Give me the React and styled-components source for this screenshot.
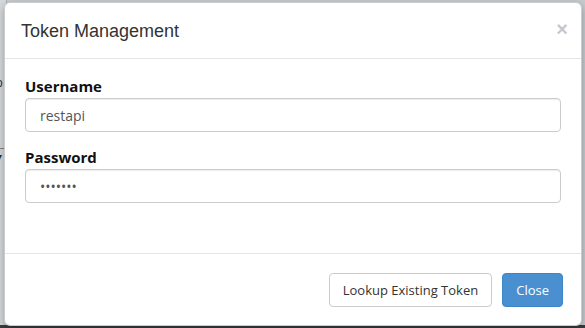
import React from "react";
import styled, { createGlobalStyle } from "styled-components";

const Global = createGlobalStyle`
  html, body { margin: 0; padding: 0; }
  body {
    width: 585px;
    height: 328px;
    overflow: hidden;
    background: #c6cbd0;
    font-family: "Open Sans", "Noto Sans", sans-serif;
  }
  #root { height: 328px; }
`;

const Backdrop = styled.div`
  position: relative;
  height: 328px;
  background: #c6cbd0;
  overflow: hidden;
`;

const BackStrip = styled.div`
  position: absolute;
  left: 0;
  top: 0;
  width: 6px;
  height: 328px;
  background: #d5d9dc;
  border-right: 1px solid #a9aeb3;
`;

const BackText = styled.span`
  position: absolute;
  left: -4px;
  top: ${(p) => p.$top}px;
  font-size: 12px;
  color: #333;
  font-family: "Liberation Sans", sans-serif;
`;

const BackLine = styled.div`
  position: absolute;
  left: 0;
  top: ${(p) => p.$top}px;
  width: 6px;
  height: 1px;
  background: #7d838a;
`;

const BottomBar = styled.div`
  position: absolute;
  left: 0;
  bottom: 0;
  width: 585px;
  height: 3px;
  background: #3a3d40;
`;

const Dialog = styled.div`
  position: absolute;
  left: 4px;
  top: 2px;
  width: 578px;
  box-sizing: border-box;
  background: #fff;
  border: 1px solid rgba(0, 0, 0, 0.2);
  border-radius: 6px;
  box-shadow: 0 3px 9px rgba(0, 0, 0, 0.3);
  display: flex;
  flex-direction: column;
`;

const Header = styled.div`
  display: flex;
  align-items: center;
  justify-content: space-between;
  padding: 15px 13px 14px 16px;
  border-bottom: 1px solid #e5e5e5;
`;

const Title = styled.h4`
  margin: 0;
  font-family: "Liberation Sans", Arial, sans-serif;
  font-weight: 400;
  font-size: 18px;
  line-height: 26px;
  color: #333;
`;

const CloseX = styled.button`
  border: 0;
  background: none;
  padding: 0;
  margin-top: -4px;
  font-family: "Liberation Sans", Arial, sans-serif;
  font-size: 20px;
  font-weight: 700;
  line-height: 1;
  color: #000;
  opacity: 0.22;
  cursor: pointer;
`;

const Body = styled.div`
  padding: 17px 20px 50px 20px;
  display: flex;
  flex-direction: column;
  gap: 15px;
`;

const Group = styled.div`
  display: flex;
  flex-direction: column;
  gap: 2px;
`;

const Label = styled.label`
  font-family: "Open Sans", sans-serif;
  font-weight: 700;
  font-size: 15px;
  line-height: 20px;
  color: #111;
`;

const Input = styled.input`
  box-sizing: border-box;
  height: 34px;
  width: 100%;
  padding: 6px 14px;
  font-family: "Open Sans", sans-serif;
  font-size: 14px;
  color: #555;
  background: #fff;
  border: 1px solid #ccc;
  border-radius: 4px;
  box-shadow: inset 0 1px 1px rgba(0, 0, 0, 0.075);
  outline: none;
`;

const Footer = styled.div`
  display: flex;
  justify-content: flex-end;
  gap: 10px;
  padding: 19px 18px 18px 20px;
  border-top: 1px solid #e5e5e5;
`;

const Button = styled.button`
  box-sizing: border-box;
  height: 34px;
  padding: 6px 13px;
  font-family: "Open Sans", sans-serif;
  font-size: 13px;
  border-radius: 4px;
  cursor: pointer;
  border: 1px solid ${(p) => (p.$primary ? "#3c86c6" : "#ccc")};
  background: ${(p) => (p.$primary ? "#4a8fcf" : "#fff")};
  color: ${(p) => (p.$primary ? "#fff" : "#333")};
`;

export default function App() {
  return (
    <>
      <Global />
      <Backdrop>
        <BackStrip />
        <BackText $top={76}>o</BackText>
        <BackLine $top={148} />
        <BackText $top={150}>▾</BackText>
        <BottomBar />
        <Dialog>
          <Header>
            <Title>Token Management</Title>
            <CloseX aria-label="Close">×</CloseX>
          </Header>
          <Body>
            <Group>
              <Label>Username</Label>
              <Input defaultValue="restapi" />
            </Group>
            <Group>
              <Label>Password</Label>
              <Input type="password" defaultValue="restapi" />
            </Group>
          </Body>
          <Footer>
            <Button>Lookup Existing Token</Button>
            <Button $primary>Close</Button>
          </Footer>
        </Dialog>
      </Backdrop>
    </>
  );
}
